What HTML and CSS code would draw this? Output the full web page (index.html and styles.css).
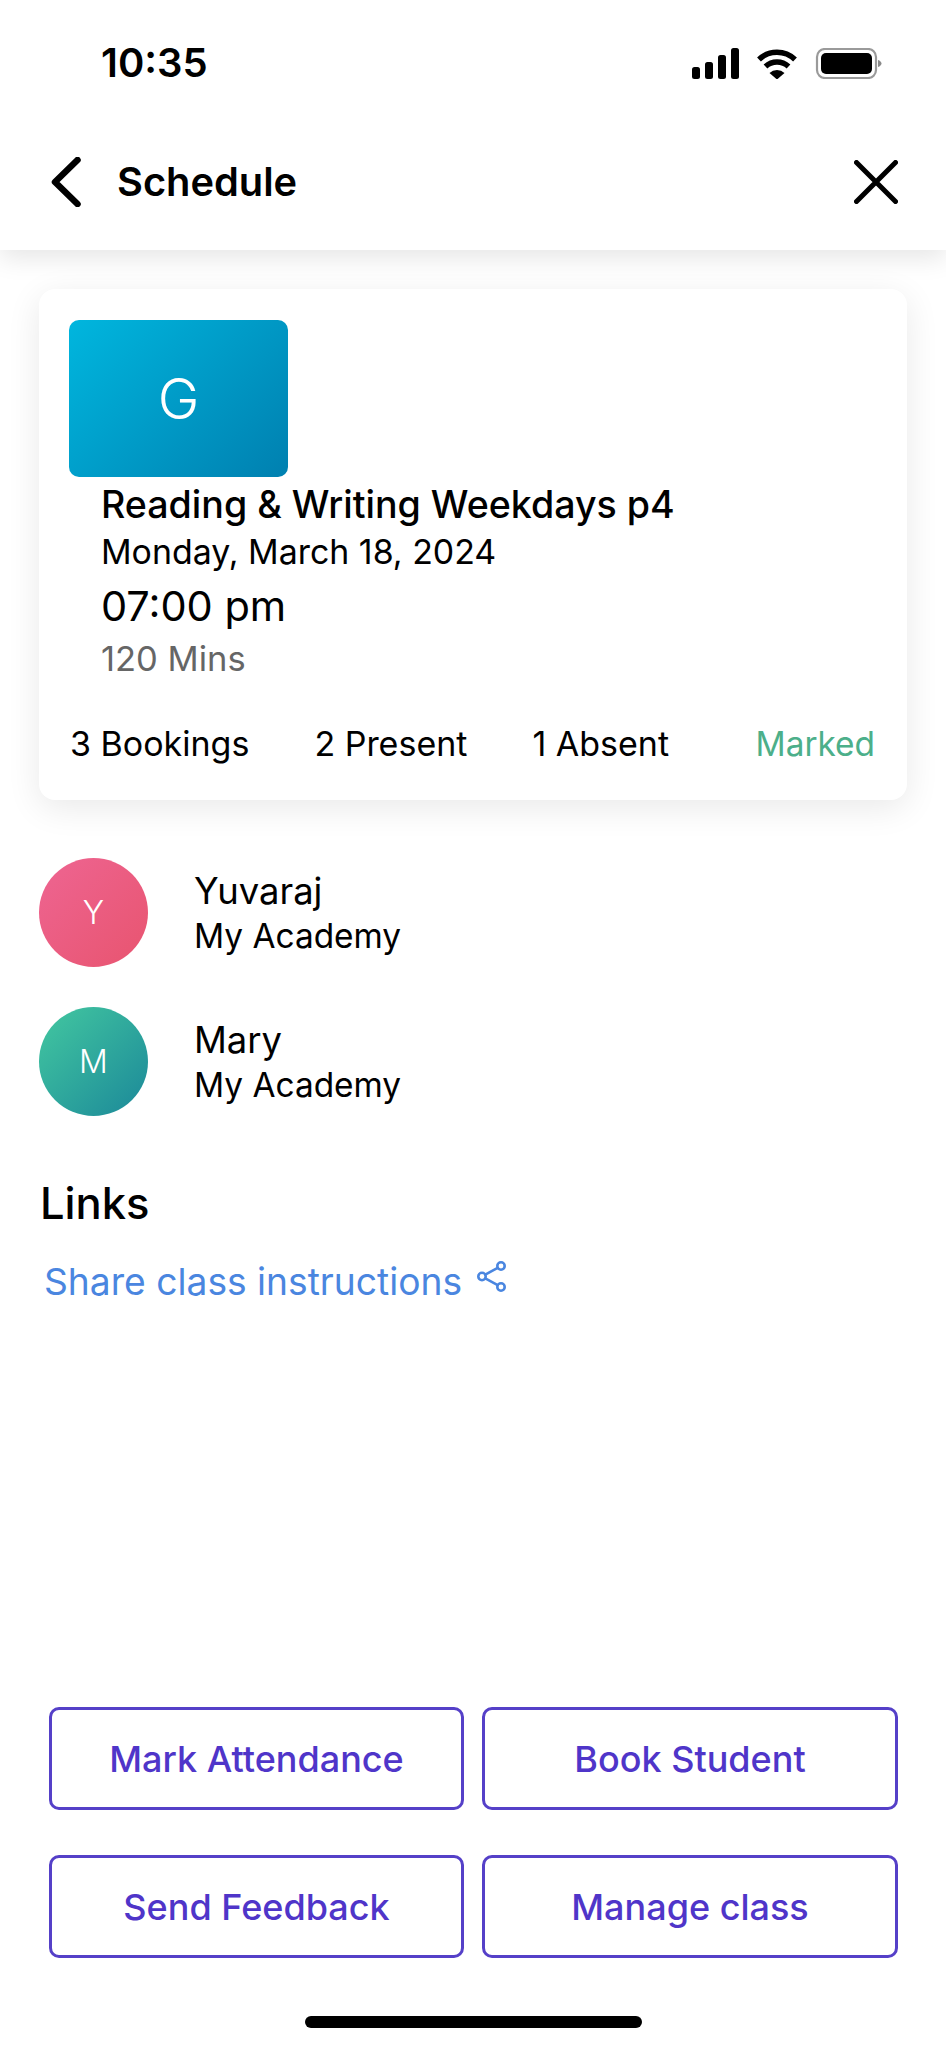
FILE: index.html
```html
<!DOCTYPE html>
<html lang="en">
<head>
<meta charset="utf-8">
<title>Schedule</title>
<link rel="stylesheet" href="styles.css">
</head>
<body>
<div class="page">
  <div class="status">
    <span class="clock">10:35</span>
    <svg class="status-icons" width="190" height="31" viewBox="0 0 190 31">
      <rect x="0" y="19" width="8" height="12" rx="2.5"/>
      <rect x="13" y="14" width="8" height="17" rx="2.5"/>
      <rect x="26" y="7" width="8" height="24" rx="2.5"/>
      <rect x="39" y="0" width="8" height="31" rx="2.5"/>
      <path d="M67 11.500a26 26 0 0 1 36 0M73.500 18.500a17 17 0 0 1 23 0" fill="none" stroke="#000" stroke-width="5.500"/>
      <path d="M77.500 25a11 11 0 0 1 15 0L85 31.500z"/>
      <rect x="125" y="1" width="59" height="29" rx="8" fill="none" stroke="#9a9a9a" stroke-width="2.2"/>
      <rect x="129" y="5" width="51" height="21" rx="5"/>
      <path d="M186 12c2 .6 3.500 2 3.500 3.500S188 18.400 186 19z" fill="#8a8a8a"/>
    </svg>
  </div>
  <header class="nav">
    <svg class="back" width="30" height="50" viewBox="0 0 30 50"><path d="M26.500 3 4 25l22.500 22" fill="none" stroke="#000" stroke-width="6.500" stroke-linecap="round" stroke-linejoin="round"/></svg>
    <h1 class="nav-title">Schedule</h1>
    <svg class="close" width="44" height="44" viewBox="0 0 44 44"><path d="M2.500 2.500l39 39M41.500 2.500l-39 39" fill="none" stroke="#000" stroke-width="5" stroke-linecap="round"/></svg>
  </header>
  <main class="content">
    <section class="card">
      <div class="thumb">G</div>
      <div class="details">
        <div class="class-name">Reading &amp; Writing Weekdays p4</div>
        <div class="class-date">Monday, March 18, 2024</div>
        <div class="class-time">07:00 pm</div>
        <div class="class-length">120 Mins</div>
      </div>
      <div class="stats">
        <span>3 Bookings</span>
        <span>2 Present</span>
        <span>1 Absent</span>
        <span class="marked">Marked</span>
      </div>
    </section>
    <section class="students">
      <div class="student">
        <div class="avatar avatar-pink">Y</div>
        <div class="student-text">
          <div class="student-name">Yuvaraj</div>
          <div class="student-org">My Academy</div>
        </div>
      </div>
      <div class="student">
        <div class="avatar avatar-teal">M</div>
        <div class="student-text">
          <div class="student-name">Mary</div>
          <div class="student-org">My Academy</div>
        </div>
      </div>
    </section>
    <h2 class="links-title">Links</h2>
    <a class="share" href="#">
      <span>Share class instructions</span>
      <svg class="share-icon" width="30" height="32" viewBox="0 0 30 32"><g fill="none" stroke="#4a86e0" stroke-width="2.600"><circle cx="5" cy="15.500" r="3.700"/><circle cx="24" cy="5" r="3.700"/><circle cx="24" cy="26" r="3.700"/><path d="M8.300 13.600 20.700 6.800M8.300 17.400l12.400 6.800"/></g></svg>
    </a>
  </main>
  <footer class="footer">
    <div class="actions">
      <button class="action">Mark Attendance</button>
      <button class="action">Book Student</button>
      <button class="action">Send Feedback</button>
      <button class="action">Manage class</button>
    </div>
    <div class="home-bar"></div>
  </footer>
</div>
</body>
</html>
```
FILE: styles.css
```css
* { box-sizing: border-box; }
html, body { margin: 0; padding: 0; background: #fff; }
body { font-family: Inter, "Liberation Sans", sans-serif; color: #000; }
.page { display: flex; flex-direction: column; height: 2048px; overflow: hidden; background: #fff; }

.status { display: flex; align-items: center; justify-content: space-between; height: 114px; padding: 12px 64px 0 101px; background: #fff; position: relative; z-index: 2; }
.clock { font-size: 40px; font-weight: 600; line-height: 50px; }
.status-icons { display: block; }

.nav { display: flex; align-items: center; height: 136px; padding: 0 48px 0 51px; background: #fff; box-shadow: 0 8px 24px rgba(0, 0, 0, .1); position: relative; z-index: 1; }
.back { display: block; }
.nav-title { margin: 0 0 0 36px; font-size: 39.800px; font-weight: 600; line-height: 50px; }
.close { display: block; margin-left: auto; }

.content { padding: 39px 39px 0; }
.card { height: 511px; padding: 31px 32px 33px 30px; background: #fff; border-radius: 16px; box-shadow: 0 8px 34px rgba(0, 0, 0, .09); }
.thumb { display: flex; align-items: center; justify-content: center; width: 219px; height: 157px; border-radius: 10px; background: linear-gradient(135deg, #00b6de, #0080b0); color: #fff; font-size: 56px; font-weight: 300; }
.details { margin-left: 32px; }
.class-name { margin-top: 5px; font-size: 37.600px; font-weight: 500; line-height: 46px; }
.class-date { margin-top: 1px; font-size: 33.900px; line-height: 46px; }
.class-time { margin-top: 5px; font-size: 41.500px; line-height: 52px; }
.class-length { margin-top: 5px; font-size: 34.500px; line-height: 44px; color: #666; }
.stats { display: flex; gap: 65px; margin-top: 41px; padding-left: 1px; font-size: 34px; line-height: 44px; }
.marked { margin-left: auto; font-size: 33.400px; color: #4caf8a; }

.students { display: flex; flex-direction: column; gap: 40px; margin-top: 58px; }
.student { display: flex; gap: 46px; height: 109px; }
.avatar { display: flex; align-items: center; justify-content: center; width: 109px; height: 109px; border-radius: 50%; color: #fff; font-size: 32px; font-weight: 300; }
.avatar-pink { background: linear-gradient(135deg, #ee6592, #e8546f); }
.avatar-teal { background: linear-gradient(135deg, #43c8a0, #1b8899); }
.student-text { padding-top: 10px; }
.student-name { font-size: 36.400px; line-height: 46px; }
.student-org { font-size: 33.400px; line-height: 45px; }

.links-title { margin: 62px 0 0 1px; font-size: 43.500px; font-weight: 500; line-height: 50px; }
.share { display: flex; align-items: flex-start; gap: 15px; margin: 29px 0 0 5px; font-size: 37.200px; line-height: 50px; color: #4a86e0; text-decoration: none; }
.share-icon { display: block; margin-top: 4px; }

.footer { margin-top: auto; padding: 0 49px 20px; }
.actions { display: grid; grid-template-columns: 415px 416px; grid-auto-rows: 103px; gap: 45px 18px; }
.action { padding: 0; border: 3px solid #5540c8; border-radius: 10px; background: #fff; color: #4f35c9; font-family: inherit; font-size: 36px; font-weight: 500; line-height: 50px; }
.home-bar { width: 337px; height: 12px; margin: 58px auto 0; border-radius: 6px; background: #000; }
```
